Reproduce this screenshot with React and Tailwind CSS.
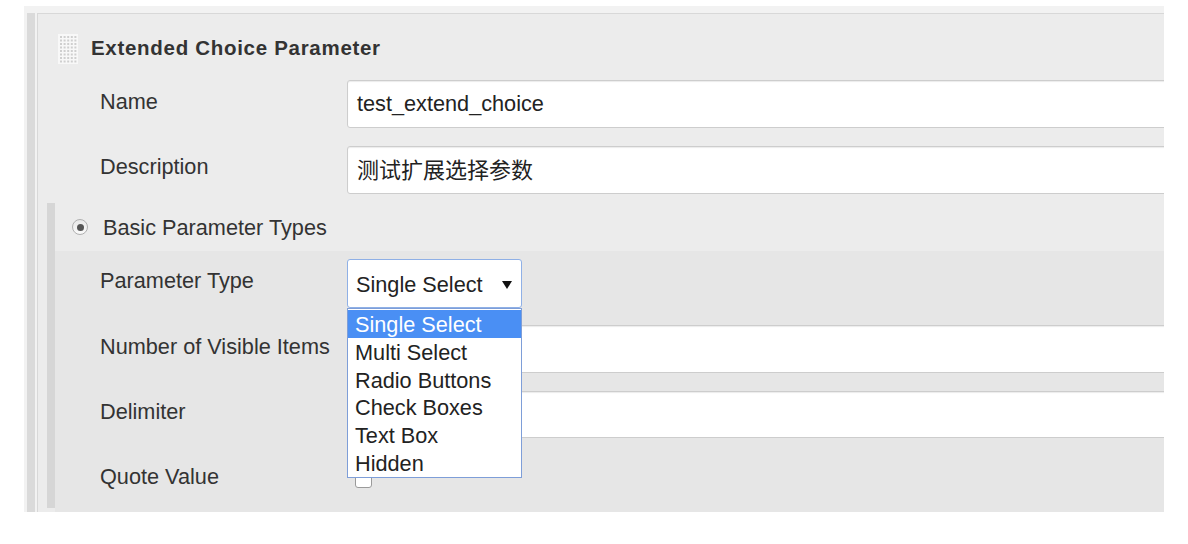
import React from "react";

const font = "font-['Liberation_Sans','Noto_Sans_CJK_SC',Arial,sans-serif]";

function Handle() {
  const dots = [];
  for (let r = 0; r < 8; r++) {
    for (let c = 0; c < 5; c++) {
      dots.push(
        <rect key={`${r}-${c}`} x={2 + c * 3.6} y={2 + r * 3.5} width="2" height="2" fill="#cfcfcf" />
      );
    }
  }
  return (
    <svg width="20" height="30" viewBox="0 0 20 30" className="shrink-0">
      <rect x="0" y="0" width="20" height="30" fill="#f8f8f8" />
      {dots}
    </svg>
  );
}

function TextInput({ children }) {
  return (
    <div className="w-[900px] shrink-0 h-full bg-white border border-[#cdcdcd] rounded-[3px] shadow-[inset_0_1px_1px_rgba(0,0,0,0.08)] flex items-center pl-[9px] pt-[1px] text-[21.7px] text-[#222] whitespace-nowrap">
      {children}
    </div>
  );
}

export default function App() {
  const items = ["Single Select", "Multi Select", "Radio Buttons", "Check Boxes", "Text Box", "Hidden"];
  return (
    <div className={`w-[1188px] h-[544px] bg-white overflow-hidden ${font}`}>
      <div className="ml-[24px] mt-[6px] w-[1140px] h-[506px] bg-[#f2f2f2] pt-[7px] pl-[3px] flex overflow-hidden">
        {/* left stripe */}
        <div className="w-[8px] bg-[#dadada] shrink-0" />
        <div className="w-[2px] shrink-0" />
        {/* panel */}
        <div className="flex-1 min-w-0 border-l border-t border-[#d8d8d8] bg-[#ececec] flex flex-col text-[#333]">
          {/* title row */}
          <div className="h-[66px] flex items-start shrink-0">
            <div className="ml-[20px] mt-[20px]">
              <Handle />
            </div>
            <div className="ml-[13px] mt-[22px] text-[20.5px] leading-[24px] font-bold tracking-[0.7px] text-[#333] whitespace-nowrap">
              Extended Choice Parameter
            </div>
          </div>
          {/* Name */}
          <div className="h-[48px] flex items-center shrink-0">
            <div className="w-[309px] pl-[62px] pb-[4px] text-[21.7px] text-[#333] shrink-0">Name</div>
            <TextInput>test_extend_choice</TextInput>
          </div>
          {/* Description */}
          <div className="h-[48px] mt-[18px] flex items-center shrink-0">
            <div className="w-[309px] pl-[62px] pb-[6px] text-[21.7px] text-[#333] shrink-0">Description</div>
            <TextInput>
              <span className="text-[22px]">测试扩展选择参数</span>
            </TextInput>
          </div>
          {/* Section */}
          <div className="mt-[9px] ml-[9px] flex flex-1 min-h-0">
            <div className="w-[8px] bg-[#d6d6d6] mb-[4px] shrink-0" />
            <div className="flex-1 min-w-0 flex flex-col">
              <div className="h-[48px] flex items-center shrink-0">
                <div className="ml-[17px] w-[16px] h-[16px] rounded-full border border-[#b0b0b0] bg-[linear-gradient(#e8e8e8,#fafafa)] flex items-center justify-center shrink-0">
                  <div className="w-[7px] h-[7px] rounded-full bg-[#555]" />
                </div>
                <div className="ml-[15px] pt-[2px] text-[21.7px] text-[#333] whitespace-nowrap">Basic Parameter Types</div>
              </div>
              <div className="flex-1 bg-[#e6e6e6] flex flex-col">
                {/* Parameter Type */}
                <div className="h-[49px] mt-[8px] flex items-center shrink-0">
                  <div className="w-[292px] pl-[45px] pb-[5px] text-[21.7px] text-[#333] shrink-0">Parameter Type</div>
                  <div className="relative w-[175px] h-full shrink-0">
                    <div className="w-full h-full bg-white border border-[#8fb0e6] rounded-[3px] flex items-center pl-[8px] pr-[9px] pt-[3px] justify-between text-[21.7px] text-[#222]">
                      <span>Single Select</span>
                      <svg width="10" height="8" viewBox="0 0 10 8">
                        <polygon points="0,0 10,0 5,8" fill="#111" />
                      </svg>
                    </div>
                    <div className="absolute left-0 top-full w-[175px] bg-white border border-[#7e9ed8] pt-[1px] z-10 text-[21.7px] text-[#222]">
                      {items.map((it, i) => (
                        <div
                          key={it}
                          className={`h-[27.8px] pt-[2px] leading-[25.8px] pl-[7px] whitespace-nowrap ${
                            i === 0 ? "bg-[#4a8ff4] text-white" : ""
                          }`}
                        >
                          {it}
                        </div>
                      ))}
                    </div>
                  </div>
                </div>
                {/* Number of Visible Items */}
                <div className="h-[48px] mt-[17px] flex items-center shrink-0">
                  <div className="w-[292px] pl-[45px] pb-[4px] text-[21.7px] text-[#333] shrink-0 whitespace-nowrap">Number of Visible Items</div>
                  <TextInput />
                </div>
                {/* Delimiter */}
                <div className="h-[47px] mt-[18px] flex items-center shrink-0">
                  <div className="w-[292px] pl-[45px] pb-[5px] text-[21.7px] text-[#333] shrink-0">Delimiter</div>
                  <TextInput />
                </div>
                {/* Quote Value */}
                <div className="h-[50px] mt-[16px] flex items-center shrink-0">
                  <div className="w-[292px] pl-[45px] pb-[4px] text-[21.7px] text-[#333] shrink-0">Quote Value</div>
                  <div className="ml-[8px] w-[17px] h-[17px] rounded-[3px] border border-[#9a9a9a] bg-white shrink-0" />
                </div>
              </div>
            </div>
          </div>
        </div>
      </div>
    </div>
  );
}
